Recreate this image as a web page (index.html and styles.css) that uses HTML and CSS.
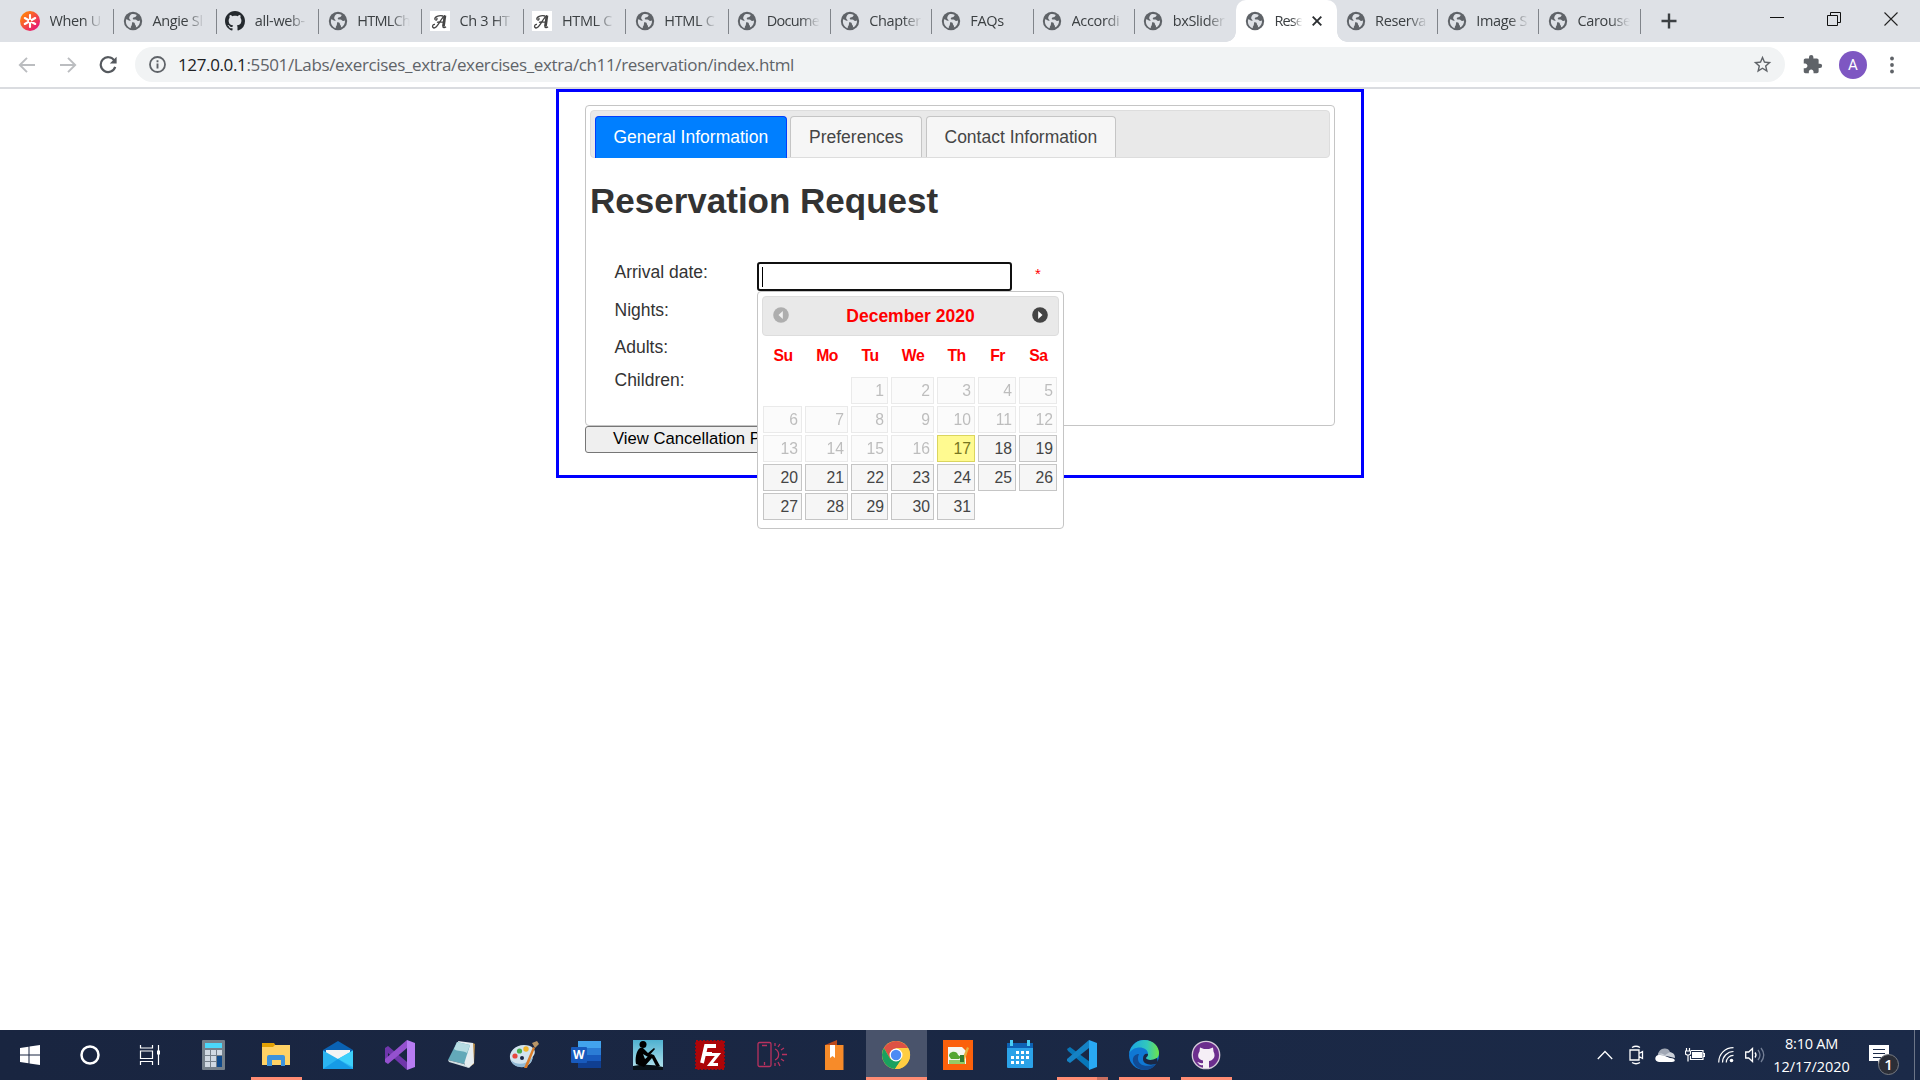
FILE: index.html
```html
<!DOCTYPE html>
<html lang="en">
<head>
<meta charset="utf-8">
<title>Reservation Request</title>
<link rel="stylesheet" href="styles.css">
</head>
<body>
<svg class="defs" width="0" height="0" aria-hidden="true">
  <symbol id="globe" viewBox="0 0 20 20">
    <circle cx="10" cy="10" r="9.2" fill="#5f6368"/>
    <path d="M3.2 8.3c1.4.2 2.2 1.3 3.7 1.4 1.8.2 2.5 1 2.2 2.3-.3 1.2 0 2.1-1 3.200-.5.7-.2 1.500-.4 2C4.500 16.300 2 12.500 3.200 8.300zM8.300 3.200c1.700-.6 4-.2 5.500.8-.7.8-.4 1.400-1.500 1.900-1.200.5-2.300.2-2.500 1.500-.2 1 1 1.200 2.400 1 1.500-.2 1.700 1.600 3.100 1.500l1.700-.3c.3 3.200-1.400 5.900-4.200 7 .2-1 .5-1.800-.3-2.400-.9-.6-.3-1.900-1.500-2.600-1.300-.7-3.300-.4-3.500-2.200-.1-1.600-1.500-1.100-1.300-2.500C6.300 5.700 7 4.300 8.300 3.200z" fill="#dee1e6"/>
  </symbol>
  <symbol id="octocat" viewBox="0 0 16 16">
    <path d="M8 0C3.580 0 0 3.580 0 8c0 3.540 2.290 6.530 5.470 7.590.4.070.55-.17.55-.38 0-.19-.01-.82-.01-1.490-2.010.37-2.530-.49-2.690-.94-.09-.23-.48-.94-.82-1.130-.28-.15-.68-.52-.01-.53.63-.01 1.080.58 1.230.82.72 1.210 1.870.87 2.330.66.07-.52.28-.87.51-1.070-1.780-.2-3.640-.89-3.640-3.950 0-.87.31-1.590.82-2.150-.08-.2-.36-1.020.08-2.120 0 0 .67-.21 2.200.82.64-.18 1.320-.27 2-.27s1.360.09 2 .27c1.530-1.040 2.200-.82 2.200-.82.44 1.100.16 1.920.08 2.120.51.56.82 1.270.82 2.150 0 3.070-1.870 3.750-3.650 3.950.29.25.54.73.54 1.480 0 1.070-.01 1.930-.01 2.200 0 .21.15.46.55.38A8.010 8.010 0 0 0 16 8c0-4.420-3.580-8-8-8z"/>
  </symbol>
  <symbol id="script-a" viewBox="0 0 20 20">
    <rect width="20" height="20" fill="#fff"/>
    <path d="M5 13.500c-2.500-.5-3.500 3-1 3.500 4 0 6-9 11-12.500M14.800 5 13 15c-.3 2 1.500 2.200 3 .8M13 5c-4-1-9 1-8 3.500 1 1.500 3-.5 1.500-1.500M7 11.500c2-1.500 5 .5 8-1" fill="none" stroke="#444" stroke-width="1.300"/>
    <path d="M15 4.500 13.500 15.500" stroke="#444" stroke-width="2.600"/>
  </symbol>
</svg>

<header class="browser">
  <div class="tabstrip">
    <div class="tab first"><svg class="fav" viewBox="0 0 20 20"><defs><linearGradient id="sun" x1="0" y1="0" x2="1" y2="1"><stop offset=".2" stop-color="#ff7a14"/><stop offset=".8" stop-color="#e9206c"/></linearGradient></defs><circle cx="10" cy="10" r="10" fill="url(#sun)"/><path d="M10 4v12M4.800 7l10.400 6M4.800 13l10.400-6" stroke="#fff" stroke-width="2.100" stroke-linecap="round"/><circle cx="10" cy="10" r="1.200" fill="#f4503f"/></svg><span class="name">When U</span></div>
    <div class="tab"><svg class="fav"><use href="#globe"/></svg><span class="name">Angie Sl</span></div>
    <div class="tab"><svg class="fav ink"><use href="#octocat"/></svg><span class="name">all-web-</span></div>
    <div class="tab"><svg class="fav"><use href="#globe"/></svg><span class="name snug">HTMLCh</span></div>
    <div class="tab"><svg class="fav"><use href="#script-a"/></svg><span class="name">Ch 3 HT</span></div>
    <div class="tab"><svg class="fav"><use href="#script-a"/></svg><span class="name">HTML C</span></div>
    <div class="tab"><svg class="fav"><use href="#globe"/></svg><span class="name">HTML C</span></div>
    <div class="tab"><svg class="fav"><use href="#globe"/></svg><span class="name snug">Docume</span></div>
    <div class="tab"><svg class="fav"><use href="#globe"/></svg><span class="name">Chapter</span></div>
    <div class="tab"><svg class="fav"><use href="#globe"/></svg><span class="name">FAQs</span></div>
    <div class="tab"><svg class="fav"><use href="#globe"/></svg><span class="name">Accordi</span></div>
    <div class="tab plain"><svg class="fav"><use href="#globe"/></svg><span class="name">bxSlider</span></div>
    <div class="tab active"><svg class="fav"><use href="#globe"/></svg><span class="name">Rese</span><svg class="close" viewBox="0 0 10 10"><path d="M.7.700l8.600 8.600M9.300.700.700 9.300" stroke="#2b2e31" stroke-width="1.900"/></svg></div>
    <div class="tab"><svg class="fav"><use href="#globe"/></svg><span class="name">Reserva</span></div>
    <div class="tab"><svg class="fav"><use href="#globe"/></svg><span class="name">Image S</span></div>
    <div class="tab"><svg class="fav"><use href="#globe"/></svg><span class="name">Carouse</span></div>
    <svg class="newtab" viewBox="0 0 16 16"><path d="M8 .5v15M.5 8h15" stroke="#3c4043" stroke-width="2.400"/></svg>
    <div class="window-buttons">
      <svg viewBox="0 0 14 14"><path d="M0 5.500h14" stroke="#111" stroke-width="1"/></svg>
      <svg viewBox="0 0 14 14"><path d="M.5 3.500h10v10H.5zM3.500 3.500v-3h10v10h-3" fill="none" stroke="#111"/></svg>
      <svg viewBox="0 0 14 14"><path d="M.5.500l13 13M13.500.500l-13 13" stroke="#222" stroke-width="1.100"/></svg>
    </div>
  </div>
  <div class="toolbar">
    <svg class="nav" viewBox="0 0 18 18"><path d="M17 9H2M9 1.800 1.800 9 9 16.200" fill="none" stroke="#bbbdc0" stroke-width="1.900"/></svg>
    <svg class="nav" viewBox="0 0 18 18"><path d="M1 9h15M9 1.800 16.200 9 9 16.200" fill="none" stroke="#bbbdc0" stroke-width="1.900"/></svg>
    <svg class="nav" viewBox="0 0 18 18"><path d="M15.300 4.500A7.400 7.400 0 1 0 16.200 10.800" fill="none" stroke="#55595e" stroke-width="2.200"/><path d="M17.600.800V7.500h-6.800z" fill="#55595e"/></svg>
    <div class="address">
      <svg class="info" viewBox="0 0 17 17"><circle cx="8.500" cy="8.500" r="7.500" fill="none" stroke="#5f6368" stroke-width="1.800"/><path d="M8.500 7.500v5M8.500 4.200v2" stroke="#5f6368" stroke-width="1.900"/></svg>
      <span class="url"><b>127.0.0.1</b>:5501/Labs/exercises_extra/exercises_extra/ch11/reservation/index.html</span>
      <svg class="star" viewBox="0 0 24 24"><path d="M22 9.240l-7.190-.62L12 2 9.190 8.630 2 9.240l5.460 4.730L5.820 21 12 17.270 18.180 21l-1.630-7.030L22 9.240zM12 15.400l-3.760 2.270 1-4.280-3.320-2.880 4.380-.38L12 6.100l1.710 4.040 4.380.38-3.320 2.880 1 4.280L12 15.400z" fill="#5f6368"/></svg>
    </div>
    <svg class="puzzle" viewBox="0 0 24 24"><path d="M20.500 11H19V7c0-1.100-.9-2-2-2h-4V3.500a2.500 2.500 0 0 0-5 0V5H4c-1.100 0-2 .9-2 2v3.800h1.500c1.500 0 2.700 1.200 2.700 2.700s-1.200 2.700-2.700 2.700H2V20c0 1.100.9 2 2 2h3.800v-1.500c0-1.500 1.200-2.700 2.700-2.700s2.700 1.200 2.700 2.700V22H17c1.100 0 2-.9 2-2v-4h1.500a2.500 2.500 0 0 0 0-5z" fill="#5f6368"/></svg>
    <span class="avatar">A</span>
    <svg class="dots" viewBox="0 0 4 18"><g fill="#5f6368"><circle cx="2" cy="2.500" r="1.900"/><circle cx="2" cy="9" r="1.900"/><circle cx="2" cy="15.500" r="1.900"/></g></svg>
  </div>
</header>

<main class="viewport">
  <section class="page">
    <div class="widget">
      <nav class="widget-tabs">
        <a class="wtab current">General Information</a>
        <a class="wtab">Preferences</a>
        <a class="wtab">Contact Information</a>
      </nav>
      <h1>Reservation Request</h1>
      <form class="fields">
        <div class="row arrival"><label>Arrival date:</label>
          <div class="date-field"><span class="date-input"><i class="caret"></i></span>
            <div class="picker">
              <div class="picker-head">
                <svg class="off" viewBox="0 0 16 16"><circle cx="8" cy="8" r="7.800" fill="#444"/><path d="M9.800 4v8L5.500 8z" fill="#fff"/></svg>
                <span>December 2020</span>
                <svg viewBox="0 0 16 16"><circle cx="8" cy="8" r="7.800" fill="#444"/><path d="M6.200 4v8L10.500 8z" fill="#fff"/></svg>
              </div>
              <div class="days">
                <b>Su</b><b>Mo</b><b>Tu</b><b>We</b><b>Th</b><b>Fr</b><b>Sa</b>
                <span class="past from-tue">1</span><span class="past">2</span><span class="past">3</span><span class="past">4</span><span class="past">5</span>
                <span class="past">6</span><span class="past">7</span><span class="past">8</span><span class="past">9</span><span class="past">10</span><span class="past">11</span><span class="past">12</span>
                <span class="past">13</span><span class="past">14</span><span class="past">15</span><span class="past">16</span><span class="today">17</span><span>18</span><span>19</span>
                <span>20</span><span>21</span><span>22</span><span>23</span><span>24</span><span>25</span><span>26</span>
                <span>27</span><span>28</span><span>29</span><span>30</span><span>31</span>
              </div>
            </div>
          </div>
          <span class="required">*</span></div>
        <div class="row nights"><label>Nights:</label></div>
        <div class="row adults"><label>Adults:</label></div>
        <div class="row"><label>Children:</label></div>
      </form>
    </div>
    <button class="policy" type="button">View Cancellation P</button>
  </section>
</main>

<footer class="taskbar">
  <div class="sys"><svg width="20" height="20" viewBox="0 0 20 20"><path d="M0 3 8.500 1.800V9.500H0zM9.500 1.600 20 0v9.500H9.500zM0 10.500h8.500v7.700L0 17zM9.500 10.500H20V20L9.500 18.400z" fill="#fff"/></svg></div>
  <div class="sys"><svg width="20" height="20" viewBox="0 0 20 20"><circle cx="10" cy="10" r="8.500" fill="none" stroke="#fff" stroke-width="2.500"/></svg></div>
  <div class="sys"><svg width="22" height="20" viewBox="0 0 22 20"><path d="M1.500 0v3h12V0M1.500 20v-3.500h12V20M1.500 6h12v7.500h-12zM19.500 0v20" fill="none" stroke="#fff" stroke-width="1.200"/><path d="M18 5.500h3v4h-3z" fill="#fff"/></svg></div>
  <div class="apps">
    <div class="app"><svg viewBox="0 0 30 30"><rect x="3" width="23" height="30" rx="1" fill="#75808b"/><path d="M6 3h17v5H6z" fill="#4bd8fb"/><path d="M6 10h5v5H6zM12 10h5v5h-5zM18 10h5v5h-5zM6 16h5v5H6zM12 16h5v5h-5zM6 22h5v5H6zM12 22h5v5h-5z" fill="#d0d9e3"/><path d="M18 16h5v11h-5z" fill="#104a8b"/></svg></div>
    <div class="app open"><svg viewBox="0 0 30 30"><path d="M1 3h12l2 3v4H1z" fill="#e2a104"/><path d="M1 7h11l2-2h15v20H1z" fill="#ffd265"/><path d="M6 26v-9q0-2 2-2h14q2 0 2 2v9h-4v-6h-9v6z" fill="#3d93dc"/></svg></div>
    <div class="app"><svg viewBox="0 0 30 30"><path d="M0 10 15 1l15 9v5H0z" fill="#0a62b3"/><path d="M3 10h24v9H3z" fill="#f4f4f4"/><path d="M0 10.500 15 19 30 10.500V29H0z" fill="#2bb4f1"/><path d="M30 10.500 15 19 30 27z" fill="#3dd0fb"/><path d="m0 29 15-10 15 10z" fill="#169be6"/></svg></div>
    <div class="app"><svg viewBox="0 0 30 30"><path d="m0 8 3-2 19 16v8L3 13v8l-3 1z" fill="#6f36ab"/><path d="M22 0v8L3 24l-3-2v-3z" fill="#9551cf"/><path d="m22 0 8 3v24l-8 3z" fill="#b77cf2"/></svg></div>
    <div class="app"><svg viewBox="0 0 30 30"><path d="m26 3 2 1-1 20-5 3z" fill="#b68a48"/><path d="m11 1 15 2 1 20-5 5-4-2z" fill="#e6edf0"/><path d="m10 2 13 3-6 19-16-4z" fill="#63a9b9"/><path d="m10 2 13 3-3 8C15 10 11 12 7 9z" fill="#b6dce2"/><path d="m1 20 16 4 5 4-20-6z" fill="#d2dfe2"/></svg></div>
    <div class="app"><svg viewBox="0 0 30 30"><path d="M15 5C6 5 0 12 1 18c1 8 11 11 18 7 6-4 3-7 6-10 3-5-2-10-10-10z" fill="#d2e4ee"/><path d="M2 20c6 6 15 5 22-3-2 8-7 11-13 10-4 0-8-3-9-7z" fill="#91b9d5"/><circle cx="6" cy="16" r="2.600" fill="#e8473d"/><circle cx="10.500" cy="11" r="2.600" fill="#49ad50"/><circle cx="17" cy="9" r="2.700" fill="#f2b52c"/><circle cx="13" cy="18" r="2" fill="#1a2744"/><path d="m15 28 9-21 2 1-8 20z" fill="#da7c29"/><path d="m23 3 5-2 2 3-4 4z" fill="#b89567"/></svg></div>
    <div class="app"><svg viewBox="0 0 30 30"><path d="M7 1h23v7H7z" fill="#42a3ed"/><path d="M7 8h23v7H7z" fill="#2b7cd5"/><path d="M7 15h23v6H7z" fill="#185abd"/><path d="M7 21h23v7H7z" fill="#103f91"/><rect y="7" width="16" height="16" rx="1" fill="#185abd"/><text x="2" y="19" class="word">W</text></svg></div>
    <div class="app"><svg viewBox="0 0 30 30"><defs><linearGradient id="sky" x2="0" y2="1"><stop stop-color="#4fb1d0"/><stop offset="1" stop-color="#b9e6ef"/></linearGradient></defs><path d="M0 0h30v30H0z" fill="url(#sky)"/><path d="M0 26q15-3 30 1v3H0z" fill="#071016"/><circle cx="10" cy="4.500" r="3.500"/><path d="M7 8c-4 3-5 11-4 16l8 3 8-9 4 8h4l-6-11-3-1-6 5-2-5 5 3 7-8-1-1-6 5-5-5z"/></svg></div>
    <div class="app"><svg viewBox="0 0 30 30"><rect x="1" y="1" width="28" height="28" fill="#ac0508" stroke="#ac0508" stroke-width="2" stroke-dasharray="2 1.500"/><path d="M7 23 11 6h10M9 14h8" fill="none" stroke="#fff" stroke-width="3.800"/><path d="M14 14.500h9L15 24.500h8" fill="none" stroke="#fff" stroke-width="3"/></svg></div>
    <div class="app"><svg viewBox="0 0 30 30"><g fill="none" stroke="#b8325f" stroke-width="1.300"><rect x="1" y="2.500" width="13" height="24" rx="1.500"/><path d="M5 5.500h5M7.500 22v3M18 9a6 6 0 0 1 0 11M18 3v3M23 4l-2 3M27 8l-3 2M25 14.500h5M24 19l3 2M21 22l2 4M18 23v3"/></g></svg></div>
    <div class="app"><svg viewBox="0 0 30 30"><path d="M6 5 18 0v8z" fill="#bb491b"/><path d="M6 5h18.500v25H6z" fill="#f78b29"/><path d="M11 5h5v13l-2.500-2-2.500 2z" fill="#fff"/></svg></div>
    <div class="app open focused"><svg viewBox="0 0 30 30"><circle cx="15" cy="15" r="14" fill="#ffcd42"/><path d="M2.900 8A14 14 0 0 1 27.100 8H15l-6 10.500z" fill="#dd5144"/><path d="M2.900 8A14 14 0 0 0 14 29l7-10.500-6 2-6-2z" fill="#1aa15f"/><path d="M27.100 8H15v7l6 3.500-7 10.500A14 14 0 0 0 27.100 8z" fill="#ffcd42"/><circle cx="15" cy="15" r="6.500" fill="#fff"/><circle cx="15" cy="15" r="5.200" fill="#4b8bf4"/></svg></div>
    <div class="app"><svg viewBox="0 0 30 30"><path d="M0 0h30v30H0z" fill="#fb610b"/><path d="M5 7h14l4 4v13H5z" fill="#f5f7ef"/><path d="M6 16c0-5 8-6 9-1l3 2-2 2H8z" fill="#55a630"/><path d="M6 20h16v4H6z" fill="#95cb66"/><path d="m18 22 6-15 2 1-5 14z" fill="#e5b13f"/><path d="M17 15h4v7h-4z" fill="#337d31"/></svg></div>
    <div class="app"><svg viewBox="0 0 30 30"><rect x="2" y="3" width="26" height="25" rx="1" fill="#2ba2e8"/><path d="M2 3h26v5H2z" fill="#0d62b4"/><path d="M5 0h3v6H5zM22 0h3v6h-3z" fill="#49cdf5"/><path d="M11 11h3v3h-3zM16 11h3v3h-3zM21 11h3v3h-3zM6 16h3v3H6zM11 16h3v3h-3zM16 16h3v3h-3zM21 16h3v3h-3zM6 21h3v3H6zM11 21h3v3h-3zM16 21h3v3h-3z" fill="#fff"/></svg></div>
    <div class="app open twin"><svg viewBox="0 0 30 30"><path d="m0 9 3-2 20 15v8L1 11z" fill="#0877b9"/><path d="M22 0v8L3 23l-3-2v-2z" fill="#1582c4"/><path d="m22 0 8 3v24l-8 3z" fill="#29a9f3"/></svg></div>
    <div class="app open"><svg viewBox="0 0 30 30"><defs><linearGradient id="wave"><stop stop-color="#1aa4e4"/><stop offset=".6" stop-color="#32c7bd"/><stop offset="1" stop-color="#6ee449"/></linearGradient></defs><circle cx="15" cy="15" r="15" fill="#0f78d4"/><path d="M10 14c-4 9 4 15 17 10-5 8-17 8-22 0-3-5 0-10 5-10z" fill="#114b94"/><path d="M0 14C2 4 9 0 15 0c10 0 15 7 15 13 0 5-4 7-8 7-4 0-5-1-5-2s2-1 2-4c0-8-15-9-19 0z" fill="url(#wave)"/><path d="M19 14c0 3-2 3-2 4 0 2 6 3 11 0l1 5c-6 3-15 2-15-4 0-4 2-6 5-5z" fill="#1a2744"/></svg></div>
    <div class="app open"><svg viewBox="0 0 30 30"><circle cx="15" cy="15" r="13.700" fill="#6c2e8d" stroke="#d6ccda" stroke-width="1.300"/><path d="M9 7.500 13 9h5l4-1.500.5 4c3 6-1 9-4.500 9.500V28h-6v-3c-4 1-4-2-6-3 3 0 3 2 6 1v-2.500c-5-1-6-5-3.500-9z" fill="#f5eff6"/></svg></div>
  </div>
  <div class="tray">
    <svg class="ic-up" viewBox="0 0 16 10"><path d="M.8 9 8 1.500 15.200 9" fill="none" stroke="#fff" stroke-width="1.300"/></svg>
    <svg class="ic-meet" viewBox="0 0 15 20"><path d="M1 5h9v10H1zM10 8.500l3.500-2v7l-3.500-2M3 2.500Q7 0 11 2.500M3 17.500Q7 20 11 17.500" fill="none" stroke="#fff" stroke-width="1.300"/></svg>
    <svg class="ic-cloud" viewBox="0 0 20 14"><path d="M3 9C2 3 7 0 10 .500c4 0 5 3 5 4l-6 5z" fill="#a0a7b4"/><path d="M3 6c3-1 5 0 7 1l5-3c4 1 5 3 5 6z" fill="#cbd0d8"/><path d="M4 14c-6-1-4-8 1-7l5 1 5 2c6 0 6 4 2 4z" fill="#fff"/></svg>
    <svg class="ic-batt" viewBox="0 0 20 14"><path d="M6 2.500h12v9H5.500V8M18.500 5.500h1v3h-1M1.500 0v3M4.500 0v3M.5 3h5v3l-1.500 1H2L.5 6zM3 7v6.500" fill="none" stroke="#fff" stroke-width="1.200"/><path d="M7 4h10v6H7z" fill="#fff"/></svg>
    <svg class="ic-wifi" viewBox="0 0 16 16"><g fill="none" stroke="#fff" stroke-width="1.200"><path d="M.7 15.500C.700 7 7 .700 15.500.700M4.500 15.500c0-6 5-11 11-11M8.300 15.500c0-4 3.200-7.200 7.200-7.200" /></g><circle cx="13.500" cy="13.500" r="1.800" fill="#fff"/></svg>
    <svg class="ic-vol" viewBox="0 0 20 16"><path d="M.7 5h3L7.500 1.500v13L3.700 11h-3z" fill="none" stroke="#fff" stroke-width="1.300"/><path d="M10 5.500q2 2.500 0 5" fill="none" stroke="#fff" stroke-width="1.300"/><path d="M13 3q4 5 0 10M16 1q5.500 7 0 14" fill="none" stroke="#758097" stroke-width="1.300"/></svg>
    <div class="clock"><span>8:10 AM</span><span class="date">12/17/2020</span></div>
    <div class="notice"><svg viewBox="0 0 20 20"><path d="M0 0h20v16h-7l-4 4v-4H0z" fill="#fff"/><path d="M4 4.500h12M4 8.500h12M4 12.500h8" stroke="#1b2a48" stroke-width="1.200"/></svg><span class="count">1</span></div>
    <i class="peek"></i>
  </div>
</footer>
</body>
</html>
```
FILE: styles.css
```css
* { box-sizing: border-box; }
body { margin: 0; width: 1920px; height: 1080px; overflow: hidden; display: flex; flex-direction: column; background: #fff; font-family: "Liberation Sans", Arial, sans-serif; }
.defs { position: absolute; }
svg { display: block; flex: none; }

/* Browser frame */
.browser { height: 89px; border-bottom: 2px solid #dadce0; font-family: "Open Sans", "Noto Sans", sans-serif; flex: none; }
.tabstrip { height: 42px; display: flex; align-items: center; padding-left: 12px; background: #dee1e6; }
.tab { width: 102.400px; height: 42px; flex: none; display: flex; align-items: center; padding-left: 8.500px; position: relative; }
.tab.first { padding-left: 8px; }
.tab:nth-child(n+9) { width: 101.200px; }
.tab::after { content: ""; position: absolute; right: 0; top: 9px; width: 1px; height: 25px; background: #80848a; }
.tab.plain::after { display: none; }
.fav { width: 20px; height: 20px; }
.fav.ink { fill: #24292e; }
.name { width: 54px; margin-left: 9.500px; overflow: hidden; white-space: nowrap; font-size: 14.500px; letter-spacing: -0.350px; line-height: 22px; color: #3c4043; -webkit-mask-image: linear-gradient(90deg, #000 62%, transparent 98%); mask-image: linear-gradient(90deg, #000 62%, transparent 98%); }
.name.snug { letter-spacing: -0.700px; }
.tab.active { background: #fff; border-radius: 10px 10px 0 0; padding-left: 9px; }
.tab.active::after { left: 100%; top: auto; bottom: 0; width: 10px; height: 10px; background: radial-gradient(circle at 100% 0, transparent 9.500px, #fff 10px); }
.tab.active::before { content: ""; position: absolute; right: 100%; bottom: 0; width: 10px; height: 10px; background: radial-gradient(circle at 0 0, transparent 9.500px, #fff 10px); }
.active .name { width: 29px; letter-spacing: -0.900px; }
.close { width: 10px; height: 10px; margin-left: 9px; }
.newtab { width: 16px; height: 16px; margin-left: 20px; }
.window-buttons { margin-left: auto; display: flex; gap: 43px; padding: 0 22px 5px 0; }
.window-buttons svg { width: 14px; height: 14px; }
.toolbar { height: 45px; display: flex; align-items: center; padding-left: 18px; }
.nav { width: 18px; height: 18px; margin-right: 22.500px; }
.address { width: 1650px; height: 35px; margin-left: -4.500px; border-radius: 18px; background: #f1f3f4; display: flex; align-items: center; padding: 0 14px; }
.info { width: 17px; height: 17px; }
.url { margin-left: 12px; font-size: 17px; letter-spacing: -0.365px; line-height: 34px; color: #5f6368; white-space: nowrap; }
.url b { font-weight: 400; color: #202124; }
.star { width: 21px; height: 21px; margin-left: auto; margin-right: -2px; }
.puzzle { width: 21px; height: 21px; margin-left: 17px; }
.avatar { width: 28px; height: 28px; margin-left: 16px; border-radius: 50%; background: #7e57c2; color: #fff; font: 15px/28px "Roboto", sans-serif; text-align: center; }
.dots { width: 4px; height: 18px; margin-left: 23px; }

/* Reservation page */
.viewport { flex: 1; padding-left: 556px; color: #333; }
.page { width: 808px; height: 389px; border: 3px solid #00f; padding: 13px 26px; }
.widget { width: 750px; height: 321px; border: 1px solid #c5c5c5; border-radius: 4px; padding: 4px; font-size: 17.500px; }
.widget-tabs { height: 48px; display: flex; gap: 3px; padding: 5px 0 0 4px; background: #e9e9e9; border: 1px solid #ddd; border-radius: 4px; }
.wtab { height: 41px; border: 1px solid #c5c5c5; border-bottom: 0; border-radius: 4px 4px 0 0; padding: 0 18px; line-height: 40px; background: #f6f6f6; color: #454545; white-space: nowrap; width: 132px; }
.wtab.current { width: 192px; height: 42px; padding: 0 17.500px; background: #007fff; border-color: #003eff; color: #fff; }
.wtab:last-child { width: 190px; margin-left: 1px; padding: 0 17.500px; }
h1 { margin: 22px 0 0; font-size: 35px; line-height: 42px; }
.fields { padding: 40px 0 0 24px; }
.row { height: 33.500px; line-height: 20px; display: flex; }
.row label { width: 142.500px; margin-left: .5px; }
.row.arrival { height: 38px; }
.row.nights { height: 37px; }
.row.adults { height: 33px; }
.date-field { position: relative; width: 255px; height: 29px; }
.date-input { display: block; height: 29px; border: 2px solid #101010; border-radius: 3px; padding: 3px; background: #fff; }
.caret { display: block; width: 1px; height: 20px; background: #000; }
.required { color: red; font-size: 15px; margin: 2px 0 0 23px; }
.picker { position: absolute; left: 0; top: 29px; width: 307px; height: 238px; border: 1px solid #c5c5c5; border-radius: 4px; background: #fff; padding: 4px; z-index: 2; }
.picker-head { height: 40px; display: flex; align-items: center; justify-content: space-between; padding: 0 10px 2px; border: 1px solid #ddd; border-radius: 4px; background: #e9e9e9; color: red; font-weight: 700; }
.picker-head span { padding-top: 2px; }
.picker-head svg { width: 16px; height: 16px; }
.picker-head .off { opacity: .35; }
.days { display: grid; grid-template-columns: 39px 43px 37px 43px 38px 38px 38px; grid-template-rows: 38px repeat(5, 27px); column-gap: 3px; row-gap: 2px; padding: 1px 0 0 1px; font-size: 15.750px; }
.days b { color: red; text-align: center; line-height: 38px; letter-spacing: -0.500px; padding-left: 1px; }
.days span { border: 1px solid #c5c5c5; background: #f6f6f6; color: #454545; text-align: right; line-height: 25px; padding-right: 3px; }
.days .past { opacity: .35; }
.days .today { border-color: #dad55e; background: #fffa90; color: #777620; }
.days .from-tue { grid-column: 3; }
.policy { display: block; width: 240px; height: 27px; padding: 0 0 2px 27px; border: 1px solid #767676; border-radius: 3px; background: #efefef; color: #000; font: 16.670px/22px "Liberation Sans", Arial, sans-serif; text-align: left; white-space: nowrap; }

/* Taskbar */
.taskbar { height: 50px; flex: none; display: flex; background: linear-gradient(90deg, #192540, #1b2a48); color: #fff; font-family: "Open Sans", "Noto Sans", sans-serif; }
.sys { width: 60px; display: flex; align-items: center; justify-content: center; }
.apps { display: flex; padding-left: 3px; }
.app { width: 62px; padding: 10px 16px; position: relative; }
.app svg { width: 30px; height: 30px; }
.app.open::after { content: ""; position: absolute; left: 6px; bottom: 0; width: 51px; height: 3px; background: #ff8c73; }
.app.focused { background: #49536b; width: 61px; margin-left: 1px; padding-left: 15px; }
.app.focused::after { left: 0; width: 61px; }
.app.twin::after { background: linear-gradient(90deg, #ff8c73 40px, #c96f60 40px); }
.word { font: 700 12px "Open Sans", sans-serif; fill: #fff; }
.tray { margin-left: auto; display: flex; align-items: center; }
.ic-up { width: 16px; height: 10px; margin-right: 16px; }
.ic-meet { width: 15px; height: 20px; margin-right: 11px; }
.ic-cloud { width: 20px; height: 14px; margin-right: 10px; }
.ic-batt { width: 20px; height: 14px; margin-right: 13px; }
.ic-wifi { width: 16px; height: 16px; margin-right: 11px; }
.ic-vol { width: 20px; height: 16px; margin-right: 8px; }
.clock { width: 77px; margin-right: 1px; display: flex; flex-direction: column; align-items: center; font-size: 14.500px; line-height: 23px; letter-spacing: -0.250px; white-space: nowrap; padding-bottom: 1px; }
.date { letter-spacing: -0.050px; }
.notice { position: relative; width: 20px; height: 20px; margin: 0 25px 0 18px; }
.notice svg { width: 20px; height: 20px; }
.count { position: absolute; left: 9px; top: 9px; width: 21px; height: 21px; border: 1px solid #777b82; border-radius: 50%; background: #2b2e37; font-size: 15px; font-weight: 600; line-height: 19px; text-align: center; }
.peek { width: 1px; height: 50px; background: #6c7587; margin-right: 5px; }
```
